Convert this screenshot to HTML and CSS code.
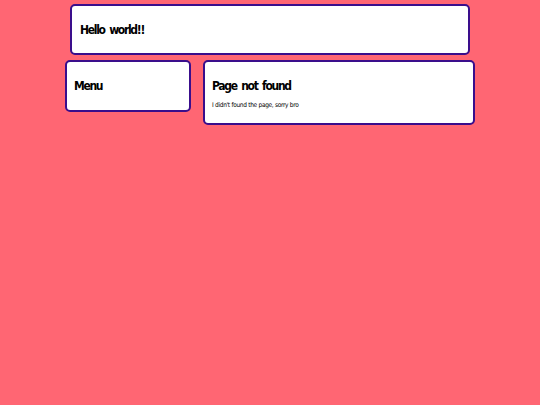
FILE: index.html
```html
<!DOCTYPE html>
<html>
<head>
<meta charset="utf-8">
<link rel="stylesheet" href="styles.css">
</head>
<body>
<div class="page">
  <header class="box header"><h1 class="title">Hello world!!</h1></header>
  <div class="row">
    <nav class="box menu"><h2 class="title">Menu</h2></nav>
    <main class="box main">
      <h2 class="title">Page not found</h2>
      <p class="text">I didn't found the page, sorry bro</p>
    </main>
  </div>
</div>
</body>
</html>
```
FILE: styles.css
```css
html, body {
  margin: 0;
  padding: 0;
  background: #ff6673;
  height: 100%;
}
body {
  font-family: "DejaVu Sans Condensed", "DejaVu Sans", sans-serif;
  color: #000;
}
.page {
  width: 410px;
  margin: 0 auto;
  padding-top: 4px;
  display: flex;
  flex-direction: column;
  align-items: center;
  gap: 5px;
}
.box {
  background: #fff;
  border: 2px solid #3a0e8c;
  border-radius: 5px;
  box-sizing: border-box;
}
.title {
  margin: 0;
  font-size: 12px;
  font-weight: bold;
  line-height: 16px;
  letter-spacing: -1.3px;
  word-spacing: 2px;
}
.header {
  width: 400px;
  height: 51px;
  display: flex;
  align-items: center;
  padding: 0 8px;
}
.row {
  width: 410px;
  display: flex;
  align-items: flex-start;
  gap: 12px;
}
.menu {
  width: 126px;
  height: 52px;
  display: flex;
  align-items: center;
  padding: 0 7px;
}
.main {
  flex: 1;
  height: 65px;
  padding: 16px 7px 0;
}
.text {
  margin: 7px 0 0;
  font-size: 6.5px;
  line-height: 8px;
  letter-spacing: -0.3px;
}
```
